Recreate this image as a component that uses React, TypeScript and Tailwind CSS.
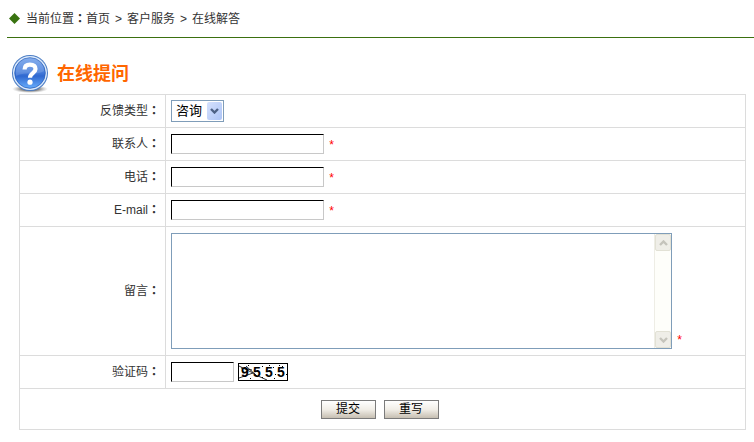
import React from "react";

const fieldClass =
  "block h-5 border border-t-black border-l-black border-r-[#c8c8c8] border-b-[#c8c8c8] bg-white px-1 text-xs outline-none";

const buttonClass =
  "h-[19px] w-[55px] border border-[#7b7b7b] bg-linear-to-b from-white via-[#f1eee7] to-[#c6bfb2] text-xs leading-4 text-black";

function Colon() {
  return <span className="font-['Noto_Sans_CJK_TC',sans-serif] font-bold">：</span>;
}

function Star() {
  return <span className="pt-1 font-['Liberation_Mono',monospace] text-xs leading-4 text-[#f00]">*</span>;
}

function HelpIcon() {
  return (
    <svg viewBox="0 0 38 38" className="h-[38px] w-[38px]" aria-hidden="true">
      <defs>
        <linearGradient id="ball" x1="0" y1="0" x2="0" y2="1">
          <stop offset="0" stopColor="#6f9fea" />
          <stop offset="0.45" stopColor="#4a80dc" />
          <stop offset="0.6" stopColor="#2f68d0" />
          <stop offset="1" stopColor="#68aefc" />
        </linearGradient>
        <radialGradient id="shade">
          <stop offset="0.5" stopColor="#555" stopOpacity="0.7" />
          <stop offset="1" stopColor="#999" stopOpacity="0" />
        </radialGradient>
      </defs>
      <ellipse cx="19" cy="34" rx="18" ry="4" fill="url(#shade)" />
      <circle cx="19" cy="18" r="18" fill="#4a7cc4" />
      <circle cx="19" cy="18" r="17" fill="#dceafb" />
      <circle cx="19" cy="18" r="15.3" fill="url(#ball)" stroke="#2c62bb" strokeWidth="0.8" />
      <path d="M5 17a14 14 0 0 1 28-1c-8 5-18 0-28 5z" fill="#fff" opacity="0.14" />
      <path
        d="M13.6 14.6c0-3.4 2-4.9 5.3-4.9 3.6 0 5.6 1.7 5.6 4.4 0 4.2-5.5 4-5.5 8.7"
        fill="none"
        stroke="#fff"
        strokeWidth="4.2"
      />
      <circle cx="19" cy="27.2" r="2.6" fill="#fff" />
    </svg>
  );
}

function Chevron({ up = false, color }: { up?: boolean; color: string }) {
  return (
    <svg viewBox="0 0 9 6" className="h-1.5 w-[9px]" aria-hidden="true">
      <path d={up ? "M1 5l3.5-3.5L8 5" : "M1 1l3.5 3.5L8 1"} fill="none" stroke={color} strokeWidth="2.4" />
    </svg>
  );
}

function Captcha() {
  return (
    <svg viewBox="0 0 50 18" className="h-[18px] w-[50px]" role="img" aria-label="验证码 9555">
      <rect x="0.5" y="0.5" width="49" height="17" fill="#fff" stroke="#000" />
      <g fontFamily="Liberation Sans, sans-serif" fontSize="14" fontWeight="bold" fill="#000">
        <text x="3" y="14">9</text>
        <text x="15" y="14">5</text>
        <text x="27" y="14">5</text>
        <text x="39" y="14">5</text>
      </g>
      <path d="M1 3l16 8M3 5l11 2M1 15l14-5M8 3l12 11M20 13l9 4" stroke="#000" strokeWidth="0.8" />
      <path
        d="M10 2h1v1h-1zM24 3h1v1h-1zM35 4h1v1h-1zM37 11h1v1h-1zM31 2h1v1h-1zM44 3h1v1h-1zM48 11h1v1h-1zM24 14h1v1h-1zM36 15h1v1h-1zM41 2h1v1h-1zM12 15h1v1h-1z"
        fill="#000"
      />
    </svg>
  );
}

interface RowProps {
  id: string;
  label: string;
  children: React.ReactNode;
}

function Row({ id, label, children }: RowProps) {
  return (
    <tr>
      <th scope="row" className="w-[146px] border border-[#dcdcdc] py-0 pr-[5px] pb-px text-right font-normal">
        <label htmlFor={id}>
          {label}
          <Colon />
        </label>
      </th>
      <td className="border border-[#dcdcdc] px-[5px] py-1.5">{children}</td>
    </tr>
  );
}

export default function App() {
  return (
    <div className="bg-white pb-3 font-['Liberation_Sans','Noto_Sans_CJK_SC',sans-serif] text-xs text-[#333]">
      <nav className="ml-[7px] flex h-[38px] items-center border-b border-[#3b700f] pl-0.5 leading-4">
        <svg viewBox="0 0 11 11" className="mr-1.5 h-[11px] w-[11px]" aria-hidden="true">
          <path d="M5.5 0L11 5.5 5.5 11 0 5.5z" fill="#397310" />
        </svg>
        <span>
          当前位置
          <Colon />
        </span>
        <a href="#home">首页</a>
        <span className="w-[17px] text-center">&gt;</span>
        <a href="#service">客户服务</a>
        <span className="w-[17px] text-center">&gt;</span>
        <a href="#answers">在线解答</a>
      </nav>

      <div className="mt-4 ml-[11px] flex h-10 items-center gap-2">
        <HelpIcon />
        <h1 className="text-lg leading-6 font-bold text-[#ff6600]">在线提问</h1>
      </div>

      <form className="mr-2 ml-[19px]" onSubmit={(e) => e.preventDefault()}>
        <table className="w-full border-collapse">
          <tbody>
            <Row id="type" label="反馈类型">
              <div className="-my-px flex h-[22px] w-[53px] border border-[#7f9db9] bg-white">
                <div className="relative flex-1">
                  <select
                    id="type"
                    className="block h-5 w-full appearance-none bg-transparent pl-1 text-[13px] leading-5 text-black outline-none"
                  >
                    <option>咨询</option>
                  </select>
                  <span className="pointer-events-none absolute top-px right-px flex h-[18px] w-[15px] items-center justify-center rounded-xs bg-linear-to-br from-[#d5e1fd] to-[#adc4f6]">
                    <Chevron color="#4d6185" />
                  </span>
                </div>
              </div>
            </Row>
            <Row id="contact" label="联系人">
              <div className="flex h-5 items-center gap-1">
                <input id="contact" type="text" className={`${fieldClass} w-[153px]`} />
                <Star />
              </div>
            </Row>
            <Row id="phone" label="电话">
              <div className="flex h-5 items-center gap-1">
                <input id="phone" type="text" className={`${fieldClass} w-[153px]`} />
                <Star />
              </div>
            </Row>
            <Row id="email" label="E-mail">
              <div className="flex h-5 items-center gap-1">
                <input id="email" type="text" className={`${fieldClass} w-[153px]`} />
                <Star />
              </div>
            </Row>
            <Row id="message" label="留言">
              <div className="flex items-end gap-1">
                <div className="flex h-[116px] w-[501px] border border-[#7f9db9]">
                  <textarea id="message" className="block flex-1 resize-none overflow-hidden p-1 outline-none" />
                  <div className="flex w-[17px] flex-col justify-between border-l border-[#eeede5] bg-[#fefefa]">
                    <span className="flex h-[17px] items-center justify-center rounded-xs border border-[#e2e1d5] bg-[#efeee8]">
                      <Chevron up color="#c5c4bc" />
                    </span>
                    <span className="flex h-[17px] items-center justify-center rounded-xs border border-[#e2e1d5] bg-[#efeee8]">
                      <Chevron color="#c5c4bc" />
                    </span>
                  </div>
                </div>
                <Star />
              </div>
            </Row>
            <Row id="code" label="验证码">
              <div className="flex items-center gap-1">
                <input id="code" type="text" className={`${fieldClass} w-[63px]`} />
                <Captcha />
              </div>
            </Row>
            <tr>
              <td colSpan={2} className="h-[41px] border border-[#dcdcdc] p-0">
                <div className="flex justify-center gap-2 pr-1.5">
                  <button type="submit" className={buttonClass}>
                    提交
                  </button>
                  <button type="reset" className={buttonClass}>
                    重写
                  </button>
                </div>
              </td>
            </tr>
          </tbody>
        </table>
      </form>
    </div>
  );
}
